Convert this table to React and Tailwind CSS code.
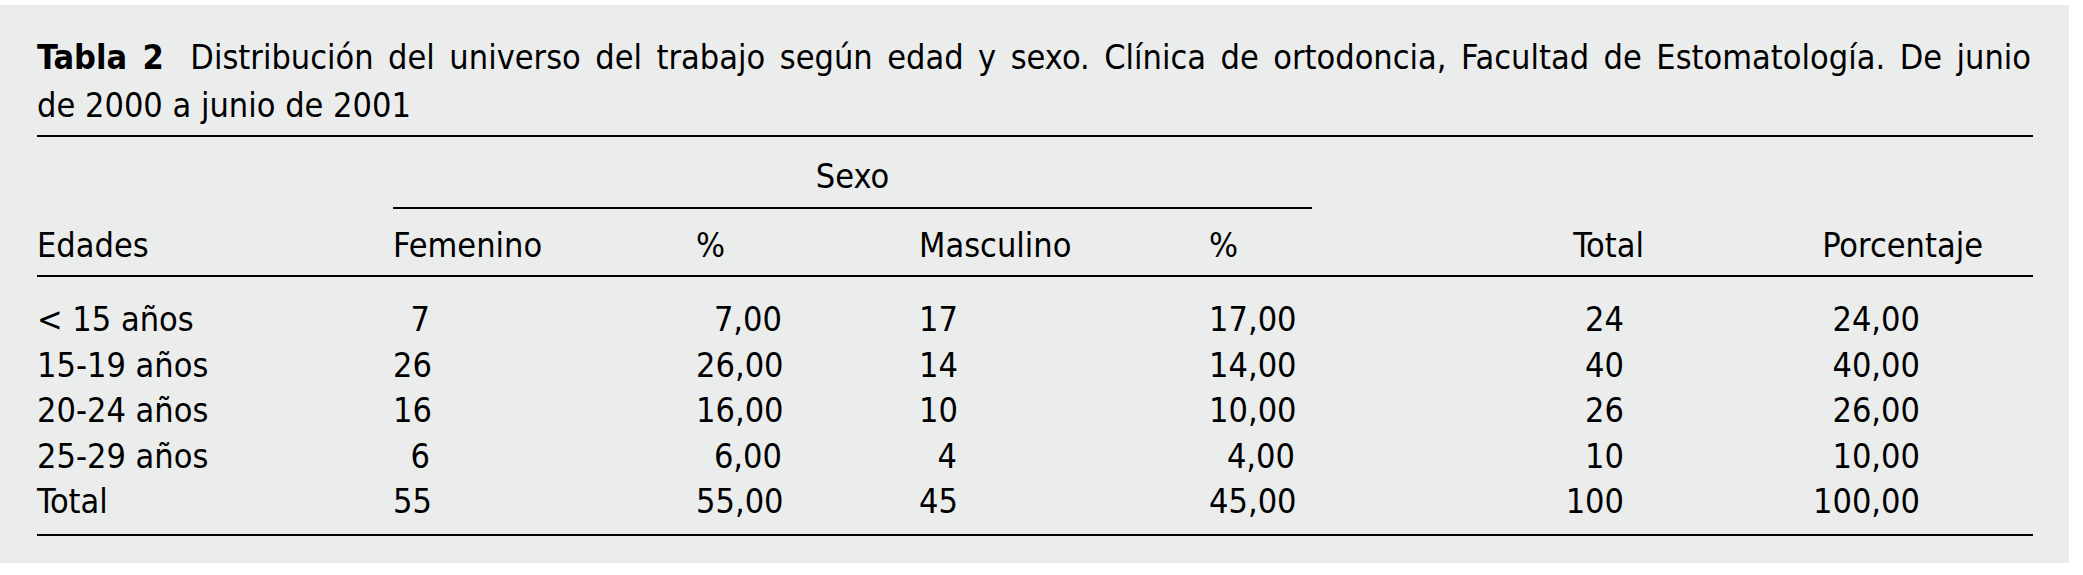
import React from "react";

const rows = [
  ["< 15 años", "7", "7,00", "17", "17,00", "24", "24,00"],
  ["15-19 años", "26", "26,00", "14", "14,00", "40", "40,00"],
  ["20-24 años", "16", "16,00", "10", "10,00", "26", "26,00"],
  ["25-29 años", "6", "6,00", "4", "4,00", "10", "10,00"],
  ["Total", "55", "55,00", "45", "45,00", "100", "100,00"],
];

// right padding per column so numbers line up like the printed table
const pads = ["", "pr-[266px]", "pr-[137px]", "pr-[252px]", "pr-[17px]", "pr-[20px]", "pr-[113px]"];

const App = () => {
  return (
    <div className="w-[2083px] h-[575px] bg-white pt-[5px]">
      <div
        className="w-[2069px] h-[558px] bg-[#ebecec] pt-[33px] px-[37px] text-black text-[34px]"
        style={{ fontFamily: '"DejaVu Sans Condensed", "Liberation Sans Narrow", "DejaVu Sans", sans-serif' }}
      >
        <div className="w-[1994px] leading-[48px] -mt-[5px]">
          {/* first line of the caption is justified to the full width */}
          <div className="whitespace-nowrap text-justify [text-align-last:justify]">
            <span className="font-bold mr-[12px]">Tabla 2</span> Distribución del universo del trabajo según edad y sexo. Clínica de ortodoncia, Facultad de Estomatología. De junio
          </div>
          <div className="whitespace-nowrap">de 2000 a junio de 2001</div>
        </div>

        <div className="w-[1996px] mt-[6px] border-t-2 border-black">
          {/* Sexo group header */}
          <div className="grid grid-cols-[356px_919px_721px] pt-[19px]">
            <div />
            <div className="text-center leading-[40px] pb-[11px] border-b-2 border-black">Sexo</div>
            <div />
          </div>

          {/* column headers */}
          <div className="grid grid-cols-[356px_303px_223px_290px_103px_332px_389px] leading-[40px] pt-[16px] pb-[10px] border-b-2 border-black">
            <div>Edades</div>
            <div className="whitespace-nowrap">Femenino</div>
            <div>%</div>
            <div className="whitespace-nowrap">Masculino</div>
            <div>%</div>
            <div className="text-right">Total</div>
            <div className="text-right pr-[50px]">Porcentaje</div>
          </div>

          {/* data */}
          <div className="pt-[20px] pb-[9px] border-b-2 border-black">
            {rows.map((r) => (
              <div
                key={r[0]}
                className="grid grid-cols-[356px_303px_223px_290px_103px_332px_389px] leading-[45.5px]"
              >
                {r.map((cell, i) => (
                  <div key={i} className={i === 0 ? "whitespace-nowrap" : `text-right ${pads[i]}`}>
                    {cell}
                  </div>
                ))}
              </div>
            ))}
          </div>
        </div>
      </div>
    </div>
  );
};

export default App;
